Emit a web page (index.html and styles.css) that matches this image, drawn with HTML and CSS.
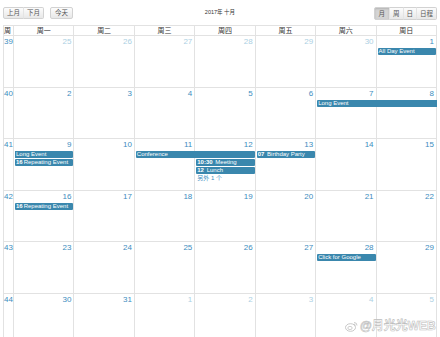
FILE: index.html
```html
<!doctype html>
<html>

<head>
    <title>日历</title>
    <meta charset="utf-8" />
    <link rel="stylesheet" href="styles.css">
</head>

<body>
    <div class="calendar">
        <div class="toolbar">
            <div class="left">
                <div class="btn-group">
                    <button class="btn">上月</button><button class="btn">下月</button>
                </div>
                <button class="btn today">今天</button>
            </div>
            <h2 class="title">2017年 十月</h2>
            <div class="right">
                <div class="btn-group">
                    <button class="btn active">月</button><button class="btn">周</button><button class="btn">日</button><button class="btn">日程</button>
                </div>
            </div>
        </div>

        <div class="head">
            <div class="wk">周</div>
            <div>周一</div>
            <div>周二</div>
            <div>周三</div>
            <div>周四</div>
            <div>周五</div>
            <div>周六</div>
            <div>周日</div>
        </div>

        <div class="week">
            <div class="day wk">39</div>
            <div class="day other">25</div>
            <div class="day other">26</div>
            <div class="day other">27</div>
            <div class="day other">28</div>
            <div class="day other">29</div>
            <div class="day other">30</div>
            <div class="day">1</div>
            <div class="ev c8 r2">All Day Event</div>
        </div>

        <div class="week">
            <div class="day wk">40</div>
            <div class="day">2</div>
            <div class="day">3</div>
            <div class="day">4</div>
            <div class="day">5</div>
            <div class="day">6</div>
            <div class="day">7</div>
            <div class="day">8</div>
            <div class="ev c7 s2 r2 cont-end">Long Event</div>
        </div>

        <div class="week">
            <div class="day wk">41</div>
            <div class="day">9</div>
            <div class="day">10</div>
            <div class="day">11</div>
            <div class="day">12</div>
            <div class="day">13</div>
            <div class="day">14</div>
            <div class="day">15</div>
            <div class="ev c2 r2 cont-start">Long Event</div>
            <div class="ev c2 r3"><b>16</b>Repeating Event</div>
            <div class="ev c4 s2 r2">Conference</div>
            <div class="ev c5 r3"><b>10:30</b> Meeting</div>
            <div class="ev c5 r4"><b>12</b> Lunch</div>
            <a class="more c5 r5">另外 1 个</a>
            <div class="ev c6 r2"><b>07</b> Birthday Party</div>
        </div>

        <div class="week">
            <div class="day wk">42</div>
            <div class="day">16</div>
            <div class="day">17</div>
            <div class="day">18</div>
            <div class="day">19</div>
            <div class="day">20</div>
            <div class="day">21</div>
            <div class="day">22</div>
            <div class="ev c2 r2"><b>16</b>Repeating Event</div>
        </div>

        <div class="week">
            <div class="day wk">43</div>
            <div class="day">23</div>
            <div class="day">24</div>
            <div class="day">25</div>
            <div class="day">26</div>
            <div class="day">27</div>
            <div class="day">28</div>
            <div class="day">29</div>
            <div class="ev c7 r2">Click for Google</div>
        </div>

        <div class="week">
            <div class="day wk">44</div>
            <div class="day">30</div>
            <div class="day">31</div>
            <div class="day other">1</div>
            <div class="day other">2</div>
            <div class="day other">3</div>
            <div class="day other">4</div>
            <div class="day other">5</div>
        </div>
    </div>

    <div class="watermark">
        <svg width="13" height="11" viewBox="0 0 13 11">
            <ellipse cx="5.5" cy="6.5" rx="5" ry="3.8" fill="none" stroke="#bbb" stroke-width="0.8" />
            <ellipse cx="5" cy="7" rx="2.2" ry="1.6" fill="none" stroke="#bbb" stroke-width="0.7" />
            <path d="M9 1.5 a3 3 0 0 1 3 3" fill="none" stroke="#bbb" stroke-width="0.8" />
            <path d="M8.8 3.2 a1.4 1.4 0 0 1 1.5 1.5" fill="none" stroke="#bbb" stroke-width="0.7" />
        </svg>
        <span>@月光光WEB</span>
    </div>
</body>

</html>
```

FILE: styles.css
```css
body { margin: 0; background: #fff; font-family: "Liberation Sans", "Noto Sans CJK SC", sans-serif; color: #333; }
.calendar { margin: 0 3px; }

/* toolbar */
.toolbar { display: grid; grid-template-columns: 1fr auto 1fr; align-items: start; height: 25px; padding-top: 7px; box-sizing: border-box; }
.left { display: flex; }
.right { display: flex; justify-content: flex-end; }
.title { margin: 1px 0 0; font-size: 5.5px; font-weight: normal; line-height: 8px; }
.btn-group { display: flex; }
.btn { font-family: inherit; font-size: 6.5px; line-height: 10px; height: 12px; padding: 0 3px; margin: 0; color: #555; background: linear-gradient(#fcfcfc, #e8e8e8); border: 1px solid #d2d2d2; border-radius: 0; }
.btn-group .btn + .btn { border-left-color: #e4e4e4; margin-left: -1px; }
.btn-group .btn:first-child { border-radius: 2px 0 0 2px; }
.btn-group .btn:last-child { border-radius: 0 2px 2px 0; }
.today { margin-left: 6px; padding: 0 4px; border-radius: 2px; }
.right .btn { height: 13px; }
.btn.active { background: #d4d4d4; box-shadow: inset 0 1px 2px rgba(0, 0, 0, 0.15); padding: 0 4px; }

/* grid */
.head, .week { display: grid; grid-template-columns: 10px repeat(7, minmax(0, 1fr)); }
.head { border-top: 1px solid #e2e2e2; border-left: 1px solid #e2e2e2; font-size: 7px; line-height: 9px; text-align: center; color: #333; }
.head > div { border-right: 1px solid #e2e2e2; border-bottom: 1px solid #e2e2e2; }
.head .wk { text-align: left; }

.week { height: 51.5px; grid-template-rows: 12px repeat(3, 8px) 1fr; border-left: 1px solid #e2e2e2; }
.day { grid-row: 1 / -1; border-right: 1px solid #e2e2e2; border-bottom: 1px solid #e2e2e2; font-size: 8px; line-height: 10px; padding: 1px 2px 0 0; text-align: right; color: #3d8dc0; }
.day:nth-child(1) { grid-column: 1; }
.day:nth-child(2) { grid-column: 2; }
.day:nth-child(3) { grid-column: 3; }
.day:nth-child(4) { grid-column: 4; }
.day:nth-child(5) { grid-column: 5; }
.day:nth-child(6) { grid-column: 6; }
.day:nth-child(7) { grid-column: 7; }
.day:nth-child(8) { grid-column: 8; }
.day.wk { text-align: left; padding: 1px 0 0 0; }
.day.other { color: #acd0e3; }

/* events */
.ev { align-self: start; margin: 0 1px; height: 7px; line-height: 7px; padding-left: 1px; font-size: 6px; color: #fff; background: #3a87ad; border-radius: 1px; white-space: nowrap; overflow: hidden; }
.ev b { font-weight: bold; margin-right: 1px; }
.cont-end { margin-right: 0; border-radius: 1px 0 0 1px; }
.cont-start { margin-left: 1px; border-radius: 0 1px 1px 0; }
.more { align-self: start; margin-left: 2px; font-size: 6px; line-height: 7px; color: #3d8dc0; }

.c2 { grid-column: 2; }
.c4 { grid-column: 4; }
.c5 { grid-column: 5; }
.c6 { grid-column: 6; }
.c7 { grid-column: 7; }
.c8 { grid-column: 8; }
.s2 { grid-column-end: span 2; }
.r2 { grid-row: 2; }
.r3 { grid-row: 3; }
.r4 { grid-row: 4; }
.r5 { grid-row: 5; }

/* watermark over the grid */
.watermark { position: absolute; left: 345px; top: 320px; display: flex; align-items: center; gap: 2px; font-size: 12px; line-height: 13px; font-weight: bold; color: rgba(255, 255, 255, 0.7); -webkit-text-stroke: 0.6px #bcbcbc; }
```
